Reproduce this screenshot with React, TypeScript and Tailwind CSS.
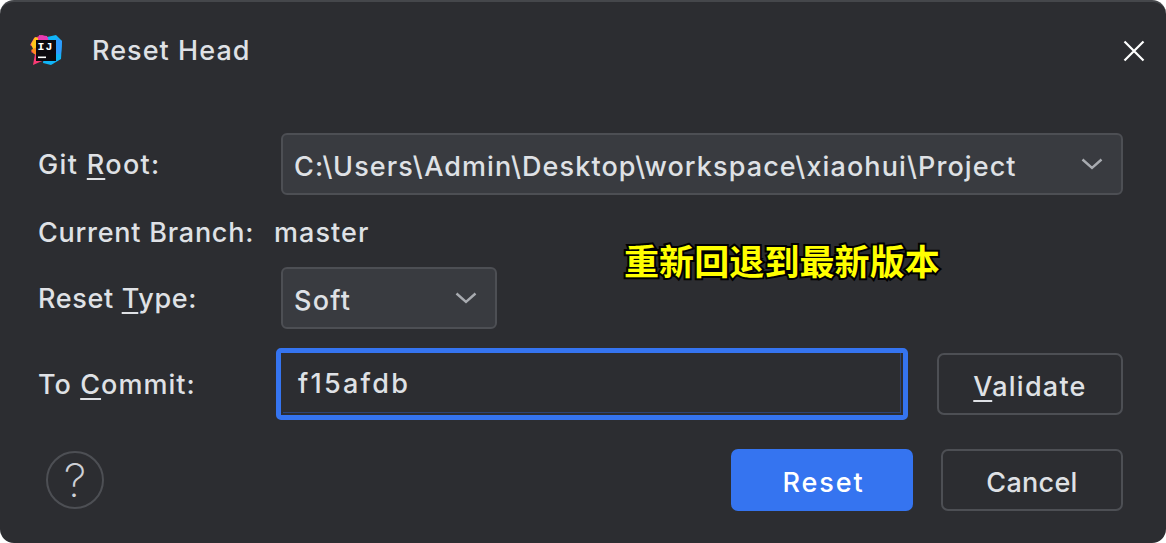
const font = "[font-family:Inter,'Noto_Sans',sans-serif]"

function Logo() {
  return (
    <svg width="34" height="34" viewBox="0 0 34 34" className="shrink-0">
      <polygon points="5,4 13,1 22,5 20,24 4,31 6,20 2,18 5,14 1,11" fill="#fb3a74" />
      <polygon points="2,10 6,3 9,4 9,15 4,15" fill="#ffc61a" />
      <polygon points="2,16 8,13 8,21 5,20" fill="#ff8a1f" />
      <polygon points="18,3 27,1 33,7 32,25 22,31 14,29" fill="#10b4f7" />
      <polygon points="27,4 33,7 32,20 27,20" fill="#2f9bff" />
      <polygon points="10,1 18,2 20,7 9,7" fill="#e83bb4" />
      <rect x="7" y="6" width="20" height="21" fill="#0c0a0f" />
      <text x="8.5" y="16" fontSize="11.5" fontWeight="700" fill="#fff" fontFamily="Liberation Mono, monospace">IJ</text>
      <rect x="9" y="22.5" width="8" height="1.6" fill="#fff" />
    </svg>
  )
}

function Chevron() {
  return (
    <svg width="22" height="12" viewBox="0 0 22 12" fill="none" stroke="#a8abb0" strokeWidth="2.4">
      <path d="M1.5 1.5 L11 10 L20.5 1.5" />
    </svg>
  )
}

function Mnemonic({ before = '', ch, after }: { before?: string; ch: string; after: string }) {
  return (
    <span className="whitespace-pre">
      {before}
      <span className="underline underline-offset-[4px] decoration-2">{ch}</span>
      {after}
    </span>
  )
}

export default function App() {
  return (
    <div className={`${font} relative w-[1166px] h-[543px] overflow-hidden bg-[#2c2d31] text-[#dfe1e5] text-[27px] leading-[32px] tracking-[1.05px] font-[450] rounded-[14px] border-t-2 border-[#45474b] flex flex-col`}>
      <div className="h-[98px] flex items-center pl-[29px] pr-[20px]">
        <Logo />
        <span className="ml-[29px] flex-1">Reset Head</span>
        <svg width="24" height="24" viewBox="0 0 24 24" stroke="#ffffff" strokeWidth="2.2">
          <path d="M2.5 2.5 L21.5 21.5 M21.5 2.5 L2.5 21.5" />
        </svg>
      </div>

      <div className="flex flex-col pl-[38px] pr-[43px] mt-[33px]">
        <div className="flex items-center h-[62px]">
          <div className="w-[243px] pt-[2px] tracking-[1.35px]"><Mnemonic before="Git " ch="R" after="oot:" /></div>
          <div className="flex-1 h-full rounded-[6px] border-2 border-[#4d4f54] bg-[#393b40] flex items-center justify-between pl-[11px] pr-[18px]">
            <span className="pt-[5px] tracking-[1.1px]">C:\Users\Admin\Desktop\workspace\xiaohui\Project</span>
            <Chevron />
          </div>
        </div>

        <div className="flex items-center mt-[22px] h-[32px]">
          <div className="w-[236px] tracking-[0.75px]">Current Branch:</div>
          <div>master</div>
        </div>

        <div className="flex items-center h-[62px] mt-[18px]">
          <div className="w-[243px] pt-[2px] tracking-[0.65px]"><Mnemonic before="Reset " ch="T" after="ype:" /></div>
          <div className="w-[216px] h-full rounded-[6px] border-2 border-[#4d4f54] bg-[#393b40] flex items-center justify-between pl-[11px] pr-[18px]">
            <span className="pt-[5px] tracking-[1.25px]">Soft</span>
            <Chevron />
          </div>
        </div>

        <div className="flex items-center h-[72px] mt-[19px]">
          <div className="w-[238px] pt-[2px] tracking-[1.05px]"><Mnemonic before="To " ch="C" after="ommit:" /></div>
          <div className="w-[632px] h-full rounded-[5px] border-[5px] border-[#3574f0] pl-[2px] pr-[2px] pb-[2px]">
            <div className="h-full flex items-center pl-[15px] pt-[2px] tracking-[2.25px] border-r border-b border-[#2c4478]">f15afdb</div>
          </div>
          <div className="ml-[29px] flex-1 h-[62px] rounded-[7px] border-2 border-[#4d4f54] flex items-center justify-center tracking-[1.25px]">
            <span className="pt-[5px]"><Mnemonic ch="V" after="alidate" /></span>
          </div>
        </div>

        <div className="flex items-center h-[62px] mt-[29px] pl-[8px]">
          <div className="w-[58px] h-[58px] rounded-full border-2 border-[#4d4f54] flex items-center justify-center text-[46px] tracking-normal text-[#ced0d6] font-extralight">?</div>
          <div className="ml-auto w-[182px] h-full rounded-[7px] bg-[#3574f0] text-white font-medium tracking-[1.9px] flex items-center justify-center pt-[6px] pl-[3px]">Reset</div>
          <div className="ml-[28px] w-[182px] h-full rounded-[7px] border-2 border-[#4d4f54] tracking-[0.3px] flex items-center justify-center pt-[5px]">Cancel</div>
        </div>
      </div>

      <div className="absolute left-[624px] top-[236px] text-[35px] leading-[44px] tracking-[0.1px] font-bold text-[#ffff00] whitespace-nowrap [font-family:'Noto_Sans_CJK_SC',sans-serif] [-webkit-text-stroke:4px_#000] [paint-order:stroke_fill]">
        重新回退到最新版本
      </div>
    </div>
  )
}
